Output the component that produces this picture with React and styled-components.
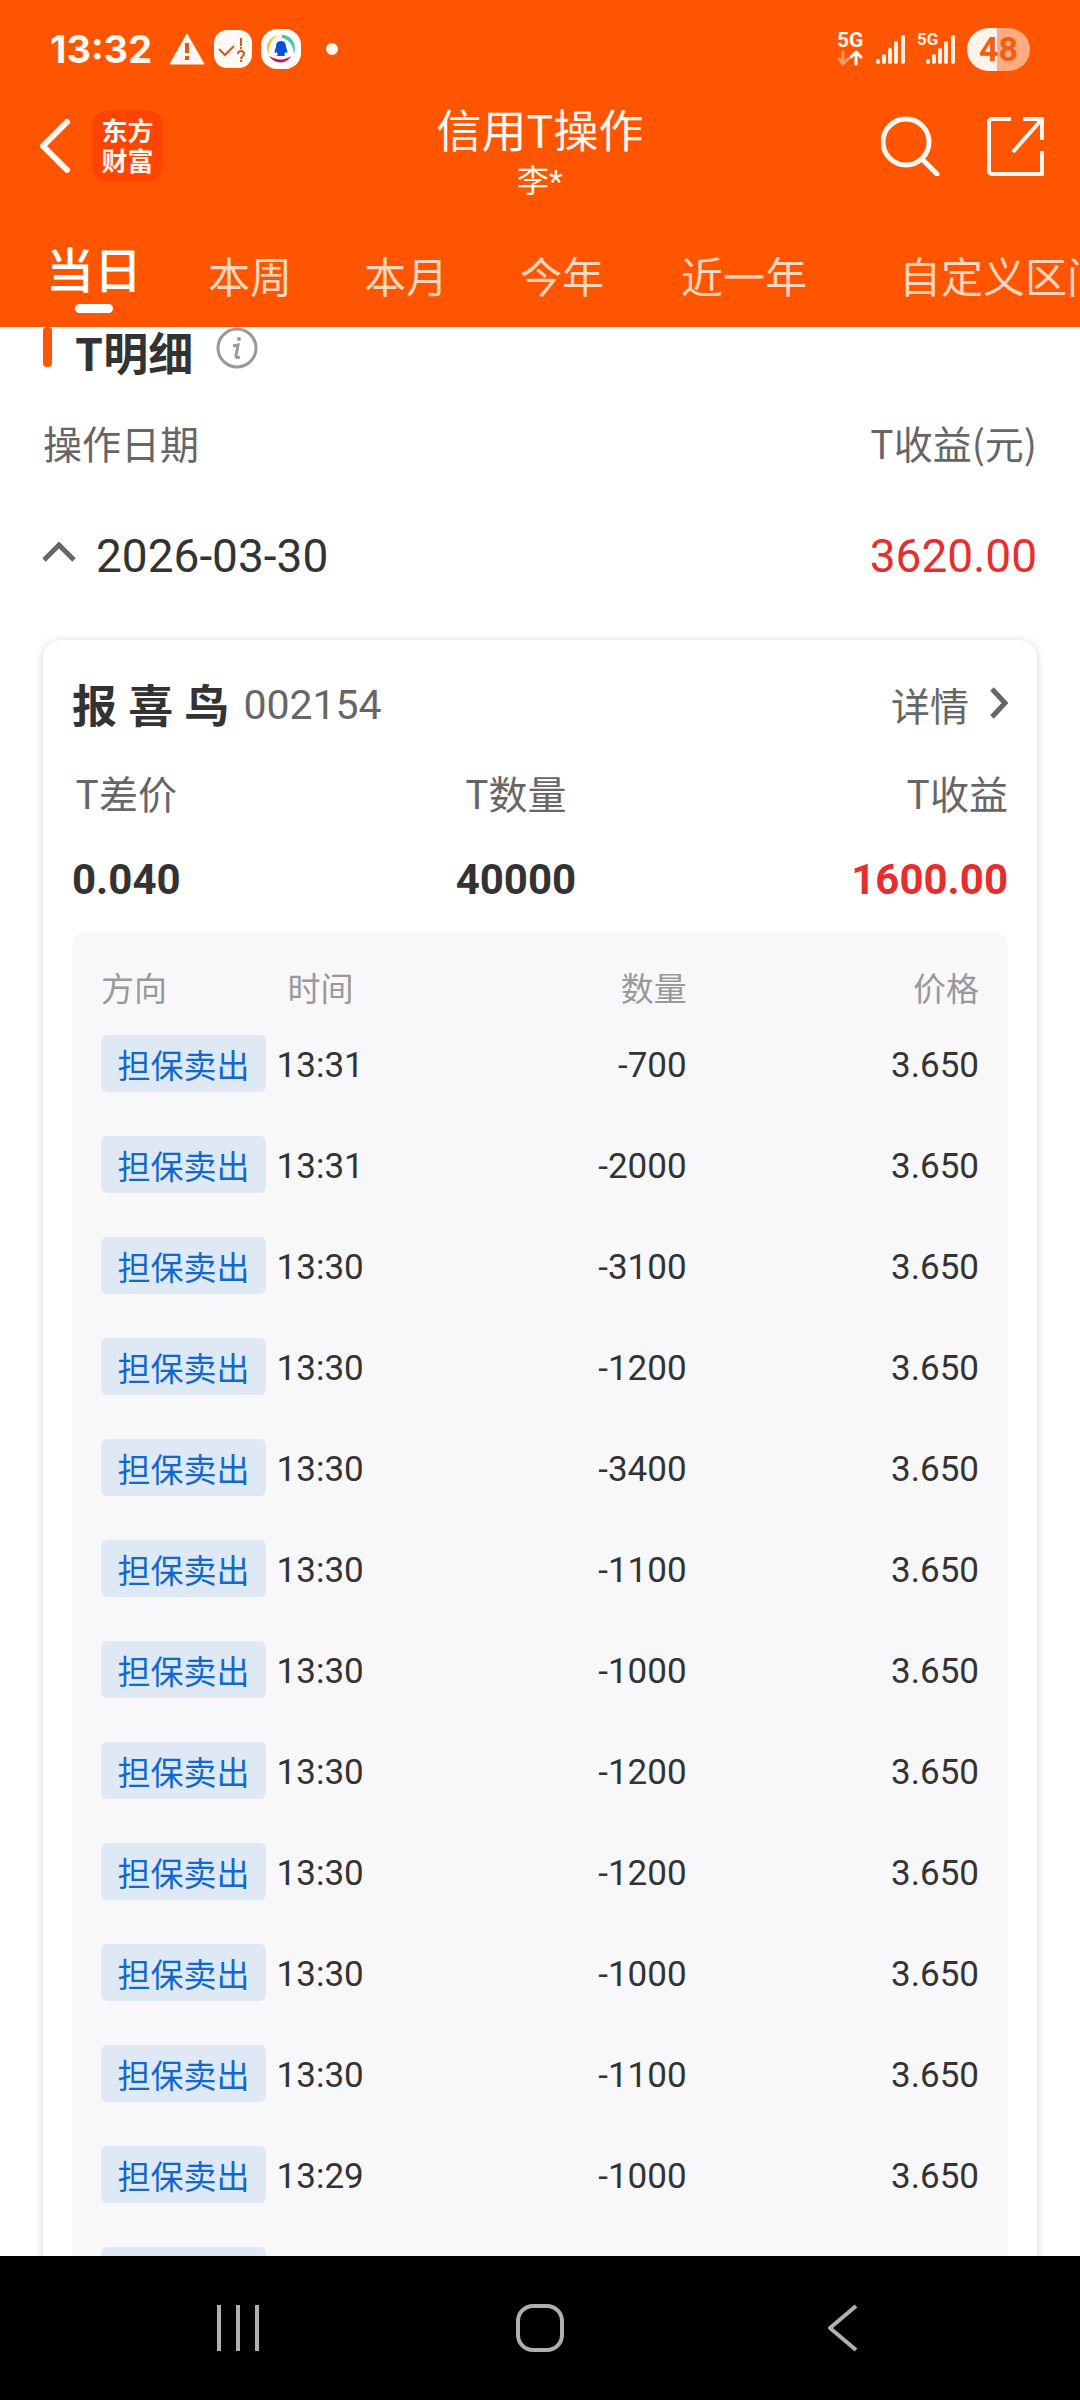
import React, { useState } from 'react';
import styled, { createGlobalStyle } from 'styled-components';

const GlobalStyle = createGlobalStyle`
    * {
        box-sizing: border-box;
    }
    body {
        margin: 0;
        background: #ffffff;
        color: #333333;
        font-family: Roboto, 'Noto Sans CJK SC', sans-serif;
    }
    button {
        padding: 0;
        border: none;
        background: none;
        color: inherit;
        font: inherit;
        cursor: pointer;
    }
    svg {
        display: block;
    }
`;

const Page = styled.div`
    display: flex;
    flex-direction: column;
    height: 100vh;
    overflow: hidden;
`;

// 顶部橙色区域
const Header = styled.header`
    flex: none;
    background: #ff5500;
    color: #fff8f2;
`;

const StatusBar = styled.div`
    display: flex;
    justify-content: space-between;
    align-items: center;
    height: 94px;
    padding: 4px 50px 0;
`;

const StatusLeft = styled.div`
    display: flex;
    align-items: center;
    gap: 9px;
`;

const Clock = styled.span`
    margin-right: 8px;
    font-family: Inter, sans-serif;
    font-size: 38px;
    font-weight: 700;
    line-height: 48px;
`;

const MoreDot = styled.span`
    width: 12px;
    height: 12px;
    margin-left: 16px;
    border-radius: 50%;
    background: #fff8f2;
`;

const StatusRight = styled.div`
    display: flex;
    align-items: center;
    gap: 12px;
`;

const Battery = styled.span`
    width: 63px;
    height: 43px;
    border-radius: 22px;
    background: linear-gradient(to right, #fff3ec 48%, #ffaa80 48%);
    color: #f2600f;
    font-size: 34px;
    font-weight: 700;
    line-height: 43px;
    text-align: center;
`;

const NavBar = styled.div`
    display: grid;
    grid-template-columns: 1fr auto 1fr;
    align-items: center;
    height: 104px;
    padding: 0 36px;
`;

const NavLeft = styled.div`
    display: flex;
    align-items: center;
    gap: 22px;
    padding-left: 4px;
`;

const NavRight = styled.div`
    display: flex;
    justify-content: flex-end;
    align-items: center;
    gap: 46px;
`;

const Logo = styled.span`
    width: 71px;
    height: 72px;
    padding: 5px 0;
    border-radius: 16px;
    background: #ff4400;
    font-family: 'Noto Sans CJK SC', sans-serif;
    font-size: 26px;
    font-weight: 700;
    line-height: 30px;
    text-align: center;
`;

const TitleBox = styled.div`
    padding-top: 9px;
    text-align: center;
`;

const Title = styled.h1`
    margin: 0 0 9px;
    font-family: 'Noto Sans CJK SC', sans-serif;
    font-size: 45px;
    font-weight: 400;
    line-height: 52px;
`;

const UserName = styled.p`
    margin: 0;
    font-size: 32px;
    line-height: 34px;
`;

const Tabs = styled.nav`
    display: flex;
    height: 129px;
    padding-left: 16px;
    overflow: hidden;
`;

const Tab = styled.button`
    display: flex;
    flex: 0 0 ${({ $chars }) => $chars * 52 + 52}px;
    flex-direction: column;
    align-items: center;
    padding-top: ${({ $active }) => ($active ? 39 : 47)}px;
    color: ${({ $active }) => ($active ? '#ffffff' : '#ffd5bd')};
    font-family: 'Noto Sans CJK SC', sans-serif;
    font-size: ${({ $active }) => ($active ? 48 : 42)}px;
    font-weight: ${({ $active }) => ($active ? 500 : 400)};
    line-height: 60px;
    white-space: nowrap;
`;

const TabLine = styled.span`
    width: 38px;
    height: 9px;
    margin-top: 7px;
    border-radius: 5px;
    background: #ffffff;
`;

// 内容区域
const Content = styled.main`
    flex: 1;
    min-height: 0;
    padding: 0 43px;
    overflow: hidden;
`;

const SectionHead = styled.div`
    display: flex;
    align-items: flex-start;
    height: 76px;
`;

const SectionMark = styled.span`
    width: 9px;
    height: 40px;
    border-radius: 4px;
    background: #ff5500;
`;

const SectionTitle = styled.h2`
    margin: 0 23px;
    font-family: 'Noto Sans CJK SC', sans-serif;
    font-size: 45px;
    font-weight: 700;
    line-height: 50px;
`;

const Row = styled.div`
    display: flex;
    justify-content: space-between;
    align-items: center;
`;

const ListHead = styled(Row)`
    height: 78px;
    color: #666666;
    font-family: 'Noto Sans CJK SC', sans-serif;
    font-size: 39px;
`;

const DateRow = styled(Row)`
    height: 149px;
    font-size: 46px;
`;

const DateButton = styled.button`
    display: flex;
    align-items: center;
    gap: 20px;
`;

const Profit = styled.span`
    color: #e62e2e;
`;

const Card = styled.section`
    margin-top: 10px;
    padding: 30px 29px;
    border-radius: 18px;
    background: #ffffff;
    box-shadow: 0 1px 8px rgba(0, 0, 0, 0.18);
`;

const CardHead = styled(Row)`
    height: 76px;
`;

const Stock = styled.div`
    display: flex;
    align-items: flex-start;
    gap: 14px;
`;

const StockName = styled.h3`
    margin: 0;
    font-size: 45px;
    font-weight: 700;
    line-height: 64px;
`;

const StockCode = styled.span`
    color: #666666;
    font-size: 41px;
    line-height: 58px;
`;

const DetailLink = styled.a`
    display: flex;
    align-items: center;
    gap: 21px;
    color: #666666;
    font-size: 39px;
    line-height: 56px;
    text-decoration: none;
`;

const Stats = styled.dl`
    display: flex;
    justify-content: space-between;
    margin: 0;
`;

const Stat = styled.div`
    text-align: ${({ $align }) => $align || 'center'};

    dt {
        color: #666666;
        font-family: 'Noto Sans CJK SC', sans-serif;
        font-size: 39px;
        line-height: 92px;
    }
    dd {
        margin: 0;
        color: ${({ $red }) => ($red ? '#e62e2e' : '#333333')};
        font-size: 42px;
        font-weight: 700;
        line-height: 84px;
    }
`;

const Panel = styled.div`
    margin-top: 9px;
    padding: 30px 29px;
    border-radius: 18px;
    background: #f8f8fa;
`;

const TradeTable = styled.table`
    width: 100%;
    border-collapse: collapse;
    table-layout: fixed;

    th,
    td {
        padding: 0;
        text-align: right;
        vertical-align: top;
    }
    th {
        height: 74px;
        color: #999999;
        font-size: 33px;
        font-weight: 400;
        line-height: 58px;
    }
    td {
        height: 101px;
        font-size: 35px;
        line-height: 61px;
    }
    th:nth-child(-n + 2),
    td:nth-child(-n + 2) {
        text-align: left;
    }
    th:nth-child(1) {
        width: 20%;
    }
    th:nth-child(2) {
        width: 14%;
        padding-left: 11px;
    }
    th:nth-child(4) {
        width: 33.3%;
    }
`;

const Tag = styled.span`
    display: block;
    width: 165px;
    height: 57px;
    border-radius: 6px;
    background: #dfe9f6;
    color: #1269cb;
    font-size: 33px;
    line-height: 64px;
    text-align: center;
`;

// 系统导航栏
const SystemBar = styled.footer`
    display: grid;
    flex: none;
    grid-template-columns: repeat(3, 1fr);
    align-items: center;
    justify-items: center;
    height: 144px;
    padding: 0 87px;
    background: #000000;
`;

const TABS = ['当日', '本周', '本月', '今年', '近一年', '自定义区间'];

const TRADES = [
    ['13:31', '-700'],
    ['13:31', '-2000'],
    ['13:30', '-3100'],
    ['13:30', '-1200'],
    ['13:30', '-3400'],
    ['13:30', '-1100'],
    ['13:30', '-1000'],
    ['13:30', '-1200'],
    ['13:30', '-1200'],
    ['13:30', '-1000'],
    ['13:30', '-1100'],
    ['13:29', '-1000'],
    ['13:29', '-1000'],
];

const WarningIcon = () => (
    <svg width="36" height="32" viewBox="0 0 36 32">
        <path d="M18 1 35 31H1Z" fill="#fff8f2" stroke="#fff8f2" strokeLinejoin="round" />
        <path d="M18 10v10M18 23v4" stroke="#e0570f" strokeWidth="4" />
    </svg>
);

const QuizIcon = () => (
    <svg width="38" height="38" viewBox="0 0 38 38">
        <rect width="38" height="38" rx="13" fill="#fffaf5" />
        <g fill="none" stroke="#d2591b" strokeWidth="2">
            <path d="M5 19l6 6 9-9M27 8v8M27 17v2" />
            <path d="M24 24c0-4 6-4 6 0 0 2-3 2-3 5M27 30v2" />
        </g>
    </svg>
);

const PenguinIcon = () => (
    <svg width="40" height="40" viewBox="0 0 40 40">
        <rect width="40" height="40" rx="16" fill="#ffffff" />
        <path d="M18 6C7 8 3 17 8 25 8 16 10 10 18 6Z" fill="#f0d040" />
        <path d="M21 6c10 0 15 10 12 19C32 16 28 10 21 9Z" fill="#3fc9a5" />
        <path d="M8 27c6 9 18 8 22 0-6 4-13 5-22 0Z" fill="#d0145c" />
        <path
            d="M20 12c-4 0-5 3-5 6-1 3-2 5-1 6l2-1c0 1 0 2 1 3l-2 1h10l-2-1c1-1 1-2 1-3l2 1c1-1 0-3-1-6 0-3-1-6-5-6Z"
            fill="#0a50d8"
        />
    </svg>
);

const SignalBars = ({ x = 0 }) => (
    <g transform={`translate(${x} 0)`} stroke="#fff0e4" strokeWidth="4" strokeLinecap="round">
        <path d="M2 28v1M8 23v6M14 17v12M20 10v19M27 4v25" />
    </g>
);

const DataIcon = () => (
    <svg width="27" height="48" viewBox="0 -6 27 48">
        <text x="0" y="16" fill="#fff8f2" fontFamily="Roboto, sans-serif" fontSize="21" fontWeight="700">
            5G
        </text>
        <g fill="none" strokeWidth="3" strokeLinecap="round" strokeLinejoin="round">
            <path d="M6 21v12M2 28l4 5 5-5" stroke="#ff9c66" />
            <path d="M19 33V21M14 26l5-5 5 5" stroke="#ffffff" />
        </g>
    </svg>
);

const SignalIcon = () => (
    <svg width="29" height="32" viewBox="0 0 29 32">
        <SignalBars />
    </svg>
);

const SecondSignalIcon = () => (
    <svg width="38" height="44" viewBox="0 -6 38 44">
        <text x="0" y="12" fill="#fff0e4" fontFamily="Roboto, sans-serif" fontSize="17" fontWeight="700">
            5G
        </text>
        <SignalBars x={9} />
    </svg>
);

const BackIcon = () => (
    <svg width="30" height="54" viewBox="0 0 30 54" fill="none">
        <path d="M27 3 3 27l24 24" stroke="#fff8f2" strokeWidth="6" strokeLinecap="round" strokeLinejoin="round" />
    </svg>
);

const SearchIcon = () => (
    <svg width="60" height="60" viewBox="0 0 60 60" fill="none" stroke="#fff8f2" strokeWidth="5">
        <circle cx="25" cy="26" r="23" />
        <path d="M41 43l15 15" strokeLinecap="round" />
    </svg>
);

const ShareIcon = () => (
    <svg width="57" height="60" viewBox="0 0 57 60" fill="none" stroke="#fff8f2" strokeWidth="4">
        <path d="M24 3H5a3 3 0 0 0-3 3v49a3 3 0 0 0 3 3h50V35" />
        <path d="M36 3h19v21M55 3 26 36" />
    </svg>
);

const InfoIcon = () => (
    <svg width="42" height="42" viewBox="0 0 42 42" fill="none" stroke="#999999">
        <circle cx="21" cy="21" r="19" strokeWidth="3" />
        <path d="M17 19l5-1-2 11c0 2 1 2 4 1" strokeWidth="3" />
        <circle cx="23" cy="12" r="2" fill="#999999" stroke="none" />
    </svg>
);

const UpIcon = () => (
    <svg width="33" height="30" viewBox="0 0 33 30" fill="none">
        <path d="M1 19 16 4l15 15" stroke="#666666" strokeWidth="5" />
    </svg>
);

const ArrowIcon = () => (
    <svg width="18" height="42" viewBox="0 0 18 42" fill="none">
        <path d="M2 2l13 14L2 30" stroke="#666666" strokeWidth="5" />
    </svg>
);

const App = () => {
    const [activeTab, setActiveTab] = useState('当日');
    const [open, setOpen] = useState(true);

    return (
        <>
            <GlobalStyle />
            <Page>
                <Header>
                    <StatusBar>
                        <StatusLeft>
                            <Clock>13:32</Clock>
                            <WarningIcon />
                            <QuizIcon />
                            <PenguinIcon />
                            <MoreDot />
                        </StatusLeft>
                        <StatusRight>
                            <DataIcon />
                            <SignalIcon />
                            <SecondSignalIcon />
                            <Battery>48</Battery>
                        </StatusRight>
                    </StatusBar>
                    <NavBar>
                        <NavLeft>
                            <button type="button" aria-label="返回">
                                <BackIcon />
                            </button>
                            <Logo>
                                东方
                                <br />
                                财富
                            </Logo>
                        </NavLeft>
                        <TitleBox>
                            <Title>信用T操作</Title>
                            <UserName>李*</UserName>
                        </TitleBox>
                        <NavRight>
                            <button type="button" aria-label="搜索">
                                <SearchIcon />
                            </button>
                            <button type="button" aria-label="分享">
                                <ShareIcon />
                            </button>
                        </NavRight>
                    </NavBar>
                    <Tabs>
                        {TABS.map((tab) => (
                            <Tab
                                key={tab}
                                type="button"
                                $chars={tab.length}
                                $active={tab === activeTab}
                                onClick={() => setActiveTab(tab)}
                            >
                                {tab}
                                {tab === activeTab && <TabLine />}
                            </Tab>
                        ))}
                    </Tabs>
                </Header>

                <Content>
                    <SectionHead>
                        <SectionMark />
                        <SectionTitle>T明细</SectionTitle>
                        <button type="button" aria-label="说明">
                            <InfoIcon />
                        </button>
                    </SectionHead>
                    <ListHead>
                        <span>操作日期</span>
                        <span>T收益(元)</span>
                    </ListHead>
                    <DateRow>
                        <DateButton type="button" aria-expanded={open} onClick={() => setOpen(!open)}>
                            <UpIcon />
                            2026-03-30
                        </DateButton>
                        <Profit>3620.00</Profit>
                    </DateRow>

                    {open && (
                        <Card>
                            <CardHead>
                                <Stock>
                                    <StockName>报 喜 鸟</StockName>
                                    <StockCode>002154</StockCode>
                                </Stock>
                                <DetailLink href="#detail">
                                    详情
                                    <ArrowIcon />
                                </DetailLink>
                            </CardHead>
                            <Stats>
                                <Stat>
                                    <dt>T差价</dt>
                                    <dd>0.040</dd>
                                </Stat>
                                <Stat>
                                    <dt>T数量</dt>
                                    <dd>40000</dd>
                                </Stat>
                                <Stat $align="right" $red>
                                    <dt>T收益</dt>
                                    <dd>1600.00</dd>
                                </Stat>
                            </Stats>
                            <Panel>
                                <TradeTable>
                                    <thead>
                                        <tr>
                                            <th>方向</th>
                                            <th>时间</th>
                                            <th>数量</th>
                                            <th>价格</th>
                                        </tr>
                                    </thead>
                                    <tbody>
                                        {TRADES.map(([time, amount], index) => (
                                            <tr key={index}>
                                                <td>
                                                    <Tag>担保卖出</Tag>
                                                </td>
                                                <td>{time}</td>
                                                <td>{amount}</td>
                                                <td>3.650</td>
                                            </tr>
                                        ))}
                                    </tbody>
                                </TradeTable>
                            </Panel>
                        </Card>
                    )}
                </Content>

                <SystemBar>
                    <button type="button" aria-label="最近任务">
                        <svg width="44" height="48" viewBox="0 0 44 48" stroke="#b0b0b0" strokeWidth="4">
                            <path d="M3 1v46M22 1v46M41 1v46" />
                        </svg>
                    </button>
                    <button type="button" aria-label="主屏幕">
                        <svg width="48" height="48" viewBox="0 0 48 48" fill="none" stroke="#b0b0b0" strokeWidth="4">
                            <rect x="2" y="2" width="44" height="44" rx="15" />
                        </svg>
                    </button>
                    <button type="button" aria-label="返回上一页">
                        <svg width="32" height="48" viewBox="0 0 32 48" fill="none" stroke="#b0b0b0" strokeWidth="4">
                            <path d="M30 2 4 24l26 22" strokeLinejoin="round" />
                        </svg>
                    </button>
                </SystemBar>
            </Page>
        </>
    );
};

export default App;
